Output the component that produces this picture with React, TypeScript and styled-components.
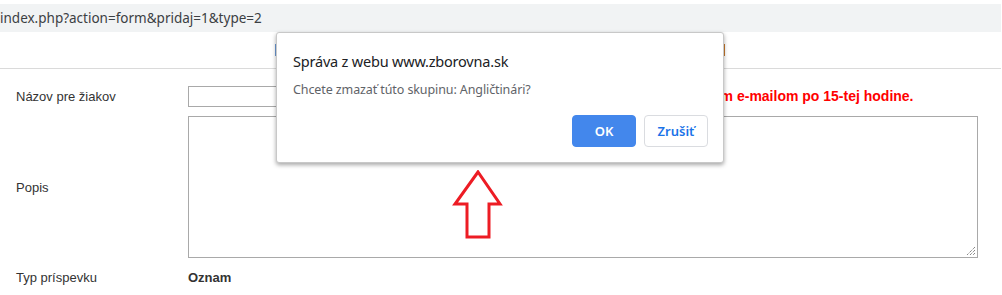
import * as React from 'react';
import styled, { createGlobalStyle } from 'styled-components';

const GlobalStyle = createGlobalStyle`
	html, body {
		margin: 0;
		padding: 0;
		background: #fff;
		overflow: hidden;
	}
`;

const Page = styled.div`
	position: relative;
	width: 1002px;
	height: 295px;
	padding-top: 4px;
	box-sizing: border-box;
	font-family: Arial, 'Liberation Sans', sans-serif;
	color: #333;
`;

const AddressBar = styled.div`
	height: 28px;
	width: 1001px;
	background-color: #f1f3f4;
	display: flex;
	align-items: center;
	padding-bottom: 1px;
	box-sizing: border-box;
	font-family: 'Noto Sans', 'Open Sans', sans-serif;
	font-size: 13.5px;
	color: #3c4043;
	white-space: nowrap;
	overflow: hidden;
`;

const NavRow = styled.div`
	height: 36px;
	width: 1001px;
	border-bottom: 1px solid #dadada;
	display: flex;
	align-items: center;
`;

const NavStrip = styled.div`
	margin-left: 275px;
	width: 448px;
	height: 12px;
	border-left: 1px solid #6c9ad6;
	border-right: 1px solid #c8782a;
`;

const Form = styled.div`
	display: grid;
	grid-template-columns: 172px 1fr;
	row-gap: 9px;
	padding: 17px 0 0 16px;
	font-size: 13px;
`;

const Label = styled.div`
	display: flex;
	align-items: center;
	color: #333;
`;

const FieldRow = styled.div`
	display: flex;
	align-items: center;
	gap: 14px;
`;

const TextInput = styled.div`
	width: 403px;
	height: 19px;
	border: 1px solid #a9a9a9;
	background: #fff;
`;

const Warning = styled.span`
	color: #f00;
	font-weight: bold;
	font-size: 14px;
	white-space: nowrap;
	margin-top: -2px;
`;

const TextArea = styled.div`
	position: relative;
	width: 788px;
	height: 140px;
	border: 1px solid #a9a9a9;
	background: #fff;
`;

const Grip = styled.svg`
	position: absolute;
	right: 1px;
	bottom: 1px;
`;

const Value = styled.div`
	font-weight: bold;
	padding-top: 3px;
`;

const LastLabel = styled(Label)`
	padding-top: 3px;
`;

const Dialog = styled.div`
	position: absolute;
	left: 276px;
	top: 32px;
	width: 448px;
	height: 131px;
	box-sizing: border-box;
	background: #fff;
	border: 1px solid #c8c8c8;
	border-radius: 3px;
	box-shadow: 0 2px 4px rgba(0, 0, 0, 0.35);
	padding: 18px 15px 15px 16px;
	font-family: 'Noto Sans', 'Open Sans', sans-serif;
	display: flex;
	flex-direction: column;
`;

const Title = styled.div`
	font-size: 14.5px;
	letter-spacing: -0.2px;
	color: #202124;
	line-height: 20px;
`;

const Message = styled.div`
	margin-top: 10px;
	font-size: 12.5px;
	letter-spacing: -0.1px;
	color: #5f6368;
	line-height: 18px;
`;

const Buttons = styled.div`
	display: flex;
	justify-content: flex-end;
	gap: 8px;
	margin-top: auto;
`;

const Button = styled.div<{ primary?: boolean }>`
	width: 64px;
	height: 32px;
	box-sizing: border-box;
	border-radius: 4px;
	display: flex;
	align-items: center;
	justify-content: center;
	font-size: 13px;
	font-weight: 600;
	background-color: ${({ primary }) => (primary ? '#4387ec' : '#fff')};
	color: ${({ primary }) => (primary ? '#fff' : '#1a73e8')};
	border: 1px solid ${({ primary }) => (primary ? '#4387ec' : '#dadce0')};
`;

const Arrow = styled.svg`
	position: absolute;
	left: 452px;
	top: 170px;
`;

export default function App() {
	return (
		<>
			<GlobalStyle />
			<Page>
				<AddressBar>index.php?action=form&amp;pridaj=1&amp;type=2</AddressBar>
				<NavRow>
					<NavStrip />
				</NavRow>
				<Form>
					<Label>Názov pre žiakov</Label>
					<FieldRow>
						<TextInput />
						<Warning>Prihlášky potvrdím e-mailom po 15-tej hodine.</Warning>
					</FieldRow>
					<Label>Popis</Label>
					<TextArea>
						<Grip width="10" height="10" viewBox="0 0 10 10">
							<path d="M9 1 L1 9 M9 4 L4 9 M9 7 L7 9" stroke="#555" strokeWidth="1" strokeDasharray="1 1" />
						</Grip>
					</TextArea>
					<LastLabel>Typ príspevku</LastLabel>
					<Value>Oznam</Value>
				</Form>
				<Dialog>
					<Title>Správa z webu www.zborovna.sk</Title>
					<Message>Chcete zmazať túto skupinu: Angličtinári?</Message>
					<Buttons>
						<Button primary>OK</Button>
						<Button>Zrušiť</Button>
					</Buttons>
				</Dialog>
				<Arrow width="52" height="70" viewBox="0 0 52 70">
					<path d="M26 2 L3 34 L15 34 L15 67 L37 67 L37 34 L48 34 Z" fill="none" stroke="#ed1c24" strokeWidth="3" strokeLinejoin="miter" />
				</Arrow>
			</Page>
		</>
	);
}
